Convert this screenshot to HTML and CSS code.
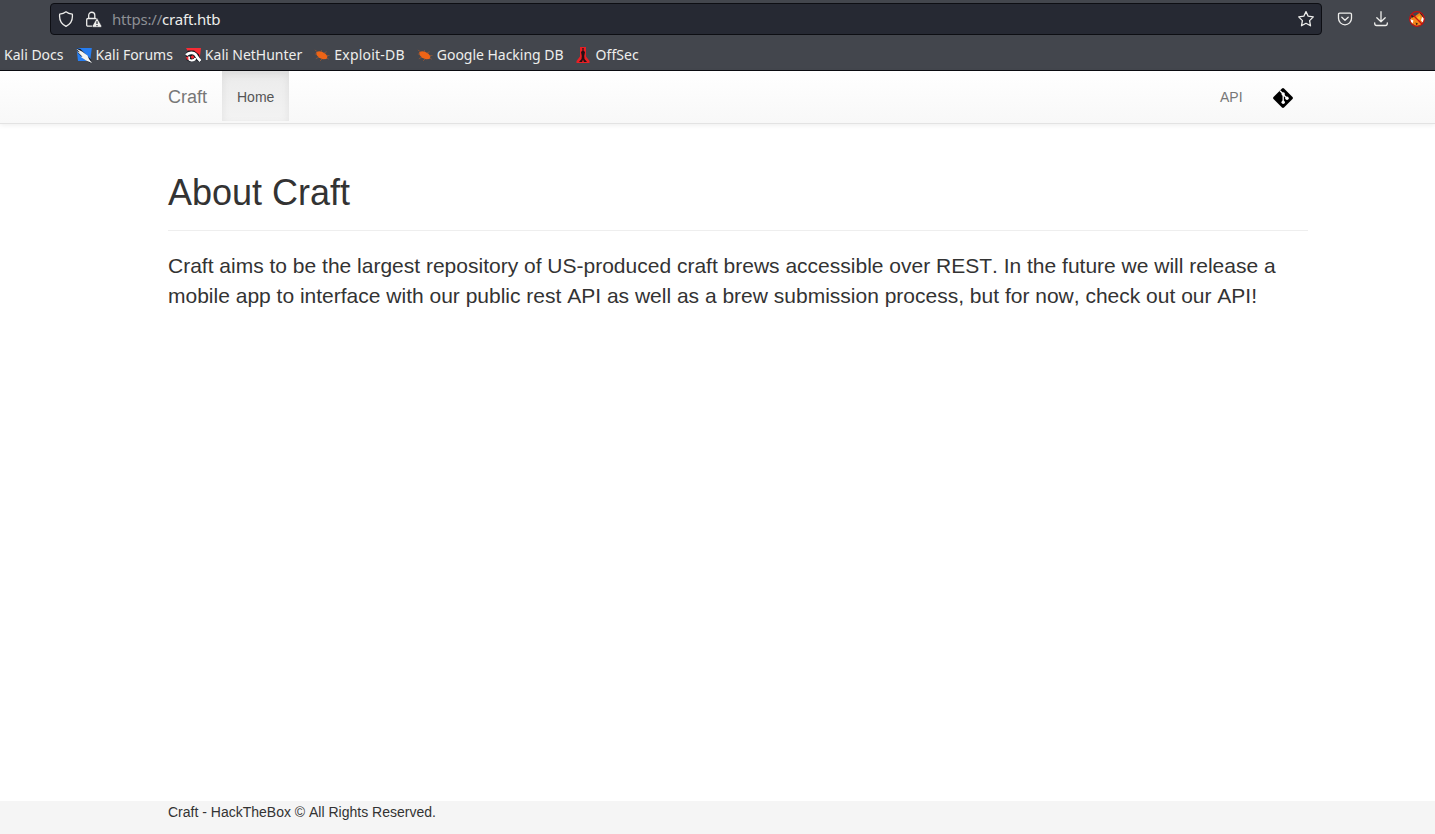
FILE: index.html
```html
<!DOCTYPE html>
<html lang="en">
<head>
<meta charset="utf-8">
<title>Craft</title>
<link rel="stylesheet" href="styles.css">
</head>
<body>
<header class="browser">
  <div class="toolbar">
    <div class="urlbar">
      <svg class="shield" width="16" height="16" viewBox="0 0 16 16"><path d="M8 .8C6.3 2.2 4 3 1.700 3.200C1 9 3.200 13 8 15.300C12.800 13 15 9 14.300 3.200C12 3 9.700 2.200 8 .8Z"/></svg>
      <svg class="lock" width="17" height="17" viewBox="0 0 17 17"><path d="M7 15.200H3Q1.700 15.200 1.700 13.900V8.800Q1.700 7.500 3 7.500H10.500Q11.600 7.500 11.800 8.500M3.700 7.500V4.300A3 3 0 0 1 9.800 4.300V7.500"/><path class="fill" d="M11.500 7.600Q12 7.100 12.500 7.600L16.700 15Q16.900 16.300 15.700 16.300H8.300Q7 16.300 7.300 15Z"/><path class="mark" d="M12 10.300V13M12 13.900V15.200"/></svg>
      <span class="url"><span class="scheme">https://</span>craft.htb</span>
      <svg class="star" width="18" height="18" viewBox="0 0 18 18"><path d="M9 1.600L11.200 6.200L16.300 6.900L12.600 10.600L13.500 15.800L9 13.300L4.500 15.800L5.400 10.600L1.700 6.900L6.800 6.200Z"/></svg>
    </div>
    <svg class="pocket" width="16" height="16" viewBox="0 0 16 16"><path d="M2.800 2.200H13.200Q14.500 2.200 14.500 3.500V7.300A6.500 6.500 0 0 1 1.500 7.300V3.500Q1.500 2.200 2.800 2.200ZM4.800 6.200L8 9.200L11.200 6.200"/></svg>
    <svg class="download" width="16" height="16" viewBox="0 0 16 16"><path d="M8 .7V10.500M3.800 6.700L8 10.700L12.200 6.700M1.700 11.800V12.600Q1.700 14.500 3.600 14.500H12.400Q14.300 14.500 14.300 12.600V11.800"/></svg>
    <svg class="fox" width="16" height="16" viewBox="0 0 16 16"><path fill="#f6871a" d="M1.500 3L6 5.300L11 1.500L15 8L12 14L7 15.300L2.500 12Z"/><path fill="#1e2229" d="M1.500 2.500L6.200 5.300L2.500 7ZM10 1.500L13.800 2.700L14 6Z"/><path fill="#fff" d="M1 8L4.500 9.500L3.500 12.500L1.300 10ZM13 6L15.500 7.500L14 11.500L12 9.500Z"/><path fill="#f8bb28" d="M7 7L11 4.500L11.500 8L8.500 10Z"/><path fill="#382316" d="M6.500 11.500L9 12.500L7.500 14.500Z"/><circle cx="8" cy="8" r="7.300" fill="none" stroke="#c91010" stroke-width="1.200"/><path d="M2.800 2.800L13.200 13.200" stroke="#c91010" stroke-width="1.300"/></svg>
  </div>
  <nav class="bookmarks">
    <span class="bookmark">Kali Docs</span>
    <span class="bookmark"><svg width="16" height="16" viewBox="0 0 16 16"><path fill="#267df0" d="M.5 1H15.800L14.200 14H2Z"/><path fill="#161c28" d="M0 1L4.500 2L15.500 13L14 16L8 12L2 6Z"/><path fill="#f5f5f2" d="M0 1.500L6 4.500L11.500 8.500L13 12L16 16L10 13.500L4.500 9.800L6.500 9.800L1 4.200L4 5.500Z"/></svg>Kali Forums</span>
    <span class="bookmark"><svg width="16" height="16" viewBox="0 0 16 16"><path fill="#f72c35" d="M1 1H16L14.500 13H8Z"/><path fill="#151820" d="M.5 7L3 3.500L9 3.500L14 7.500L16 15L13 14.500L9 12L5 15L1.500 13Z"/><path fill="none" stroke="#fff" stroke-width="2.800" d="M1.200 8.200C4 5 8.500 5.200 10.500 7.500C12 9.500 13 12 15.500 14"/><path fill="none" stroke="#fff" stroke-width="2" d="M4.500 9.500C3 11.500 4 13.500 6.500 13.500C8.500 13.500 10 12.500 10.500 11"/><path fill="#f72c35" d="M1 10L3.200 9.500L3.500 13L1.800 12.500ZM5.500 9.500L8 8.300L9.500 10.500L7 12Z"/></svg>Kali NetHunter</span>
    <span class="bookmark exploit"><svg class="bug" width="16" height="16" viewBox="0 0 16 16"><path fill="#ee6416" d="M2.200 5.200L5 4.300L8 4.700L11.500 6.700L13.500 9.500L12.500 12L9 12.300L5 10.700L2.600 8Z"/><path stroke="#a85b30" stroke-width=".6" fill="none" d="M4 5L.8 3M3 7L.8 7M5 10L1.800 11.800M8 12L6 14M7 5L7.500 3M10 6L12.700 4.700M13 8.500H15.500M13 11L14.800 12.300"/></svg>Exploit-DB</span>
    <span class="bookmark google"><svg class="bug" width="16" height="16" viewBox="0 0 16 16"><path fill="#ee6416" d="M2.200 5.200L5 4.300L8 4.700L11.500 6.700L13.500 9.500L12.500 12L9 12.300L5 10.700L2.600 8Z"/><path stroke="#a85b30" stroke-width=".6" fill="none" d="M4 5L.8 3M3 7L.8 7M5 10L1.800 11.800M8 12L6 14M7 5L7.500 3M10 6L12.700 4.700M13 8.500H15.500M13 11L14.800 12.300"/></svg>Google Hacking DB</span>
    <span class="bookmark offsec"><svg width="16" height="16" viewBox="0 0 16 16"><path fill="#e81f24" d="M5 0H11V9.500L14.500 14V16H1.500V14L5 9.500Z"/><path fill="#241013" d="M7.300 1H8.700L8.500 3.500L10 5L9.200 9L9.500 12L12 15H9L8 12.500L7 15H4L6.500 12L6.800 9L6 5L7.500 3.500Z"/></svg>OffSec</span>
  </nav>
</header>
<nav class="navbar">
  <div class="container nav-row">
    <a class="brand"><span>Craft</span></a>
    <a class="home"><span>Home</span></a>
    <a class="api"><span>API</span></a>
    <a class="git"><svg width="20" height="20" viewBox="0 0 20 20"><path d="M9 .5Q10 -.4 11 .5L19.500 9Q20.400 10 19.500 11L11 19.500Q10 20.400 9 19.500L.5 11Q-.4 10 .5 9Z"/><path d="M7 2.700L10.200 6V14.500M10.200 6.500L14 10.200" fill="none" stroke="#fff" stroke-width="1.300"/><circle cx="10.200" cy="6" r="1.700" fill="#fff"/><circle cx="10.200" cy="14.200" r="1.700" fill="#fff"/><circle cx="14" cy="10.200" r="1.700" fill="#fff"/></svg></a>
  </div>
</nav>
<main class="container">
  <h1>About Craft</h1>
  <p class="lead">Craft aims to be the largest repository of US-produced craft brews accessible over REST. In the future we will release a<br>mobile app to interface with our public rest API as well as a brew submission process, but for now, check out our API!</p>
</main>
<footer class="footer"><div class="container">Craft - HackTheBox © All Rights Reserved.</div></footer>
</body>
</html>
```
FILE: styles.css
```css
* { box-sizing: border-box; }
body {
  margin: 0;
  height: 834px;
  overflow: hidden;
  display: flex;
  flex-direction: column;
  background: #fff;
  color: #333;
  font: 14px/20px "Liberation Sans", Arial, sans-serif;
  font-kerning: none;
}
svg { display: block; flex: none; }
.browser {
  height: 71px;
  flex: none;
  background: #43464d;
  border-bottom: 1px solid #0c0d12;
  color: #eeeeec;
  font-family: "Noto Sans", sans-serif;
  font-kerning: auto;
}
.toolbar {
  display: flex;
  align-items: center;
  height: 38px;
  padding: 0 10px 0 50px;
}
.urlbar {
  display: flex;
  align-items: center;
  width: 1272px;
  height: 32px;
  padding: 0 6px 0 8px;
  background: #262933;
  border: 1px solid #0d0e13;
  border-radius: 4px;
}
.shield, .lock, .star, .pocket, .download {
  fill: none;
  stroke: #eeeeec;
  stroke-width: 1.3;
  stroke-linecap: round;
  stroke-linejoin: round;
}
.shield { margin-left: -1px; }
.lock { margin-left: 11px; }
.lock .fill { fill: #eeeeec; stroke: #262933; stroke-width: .6; }
.lock .mark { stroke: #262933; stroke-width: 1.2; stroke-linecap: butt; }
.url { margin-left: 10px; font-size: 15px; letter-spacing: -.2px; }
.scheme { color: #8d8f94; }
.star { margin-left: auto; }
.pocket { margin-left: 15px; }
.download { margin-left: 20px; }
.fox { margin-left: 20px; }
.bookmarks {
  display: flex;
  align-items: center;
  gap: 12px;
  height: 32px;
  padding: 2px 0 0 4px;
  font-size: 14px;
  white-space: nowrap;
}
.bookmark { display: flex; align-items: center; gap: 4px; height: 20px; }
.exploit { letter-spacing: .22px; }
.google { letter-spacing: -.03px; }
.offsec { letter-spacing: .1px; }
.container { width: 1140px; margin: 0 0 0 168px; }
.navbar {
  height: 53px;
  flex: none;
  background: linear-gradient(#fff, #f8f8f8);
  border-bottom: 1px solid #e3e3e3;
  box-shadow: 0 1px 5px rgba(0, 0, 0, .075);
}
.nav-row { display: flex; height: 50px; color: #777; }
.nav-row a { display: flex; align-items: center; height: 50px; padding: 2px 15px 0; }
.nav-row .brand { width: 54px; padding-left: 0; font-size: 18px; }
.nav-row .home {
  width: 67px;
  color: #555;
  background: linear-gradient(#ebebeb, #f3f3f3);
  box-shadow: inset 0 3px 9px rgba(0, 0, 0, .075);
}
.nav-row .api { margin-left: auto; width: 53px; }
.nav-row .git { width: 50px; padding-top: 4px; }
h1 {
  height: 60px;
  margin: 47px 0 0;
  padding-top: 2px;
  border-bottom: 1px solid #eee;
  font-size: 36px;
  font-weight: 400;
  line-height: 40px;
}
.lead { margin: 20px 0 0; font-size: 21px; line-height: 30px; white-space: nowrap; }
.footer {
  height: 33px;
  margin-top: auto;
  padding-top: 1px;
  background: #f5f5f5;
}
```
